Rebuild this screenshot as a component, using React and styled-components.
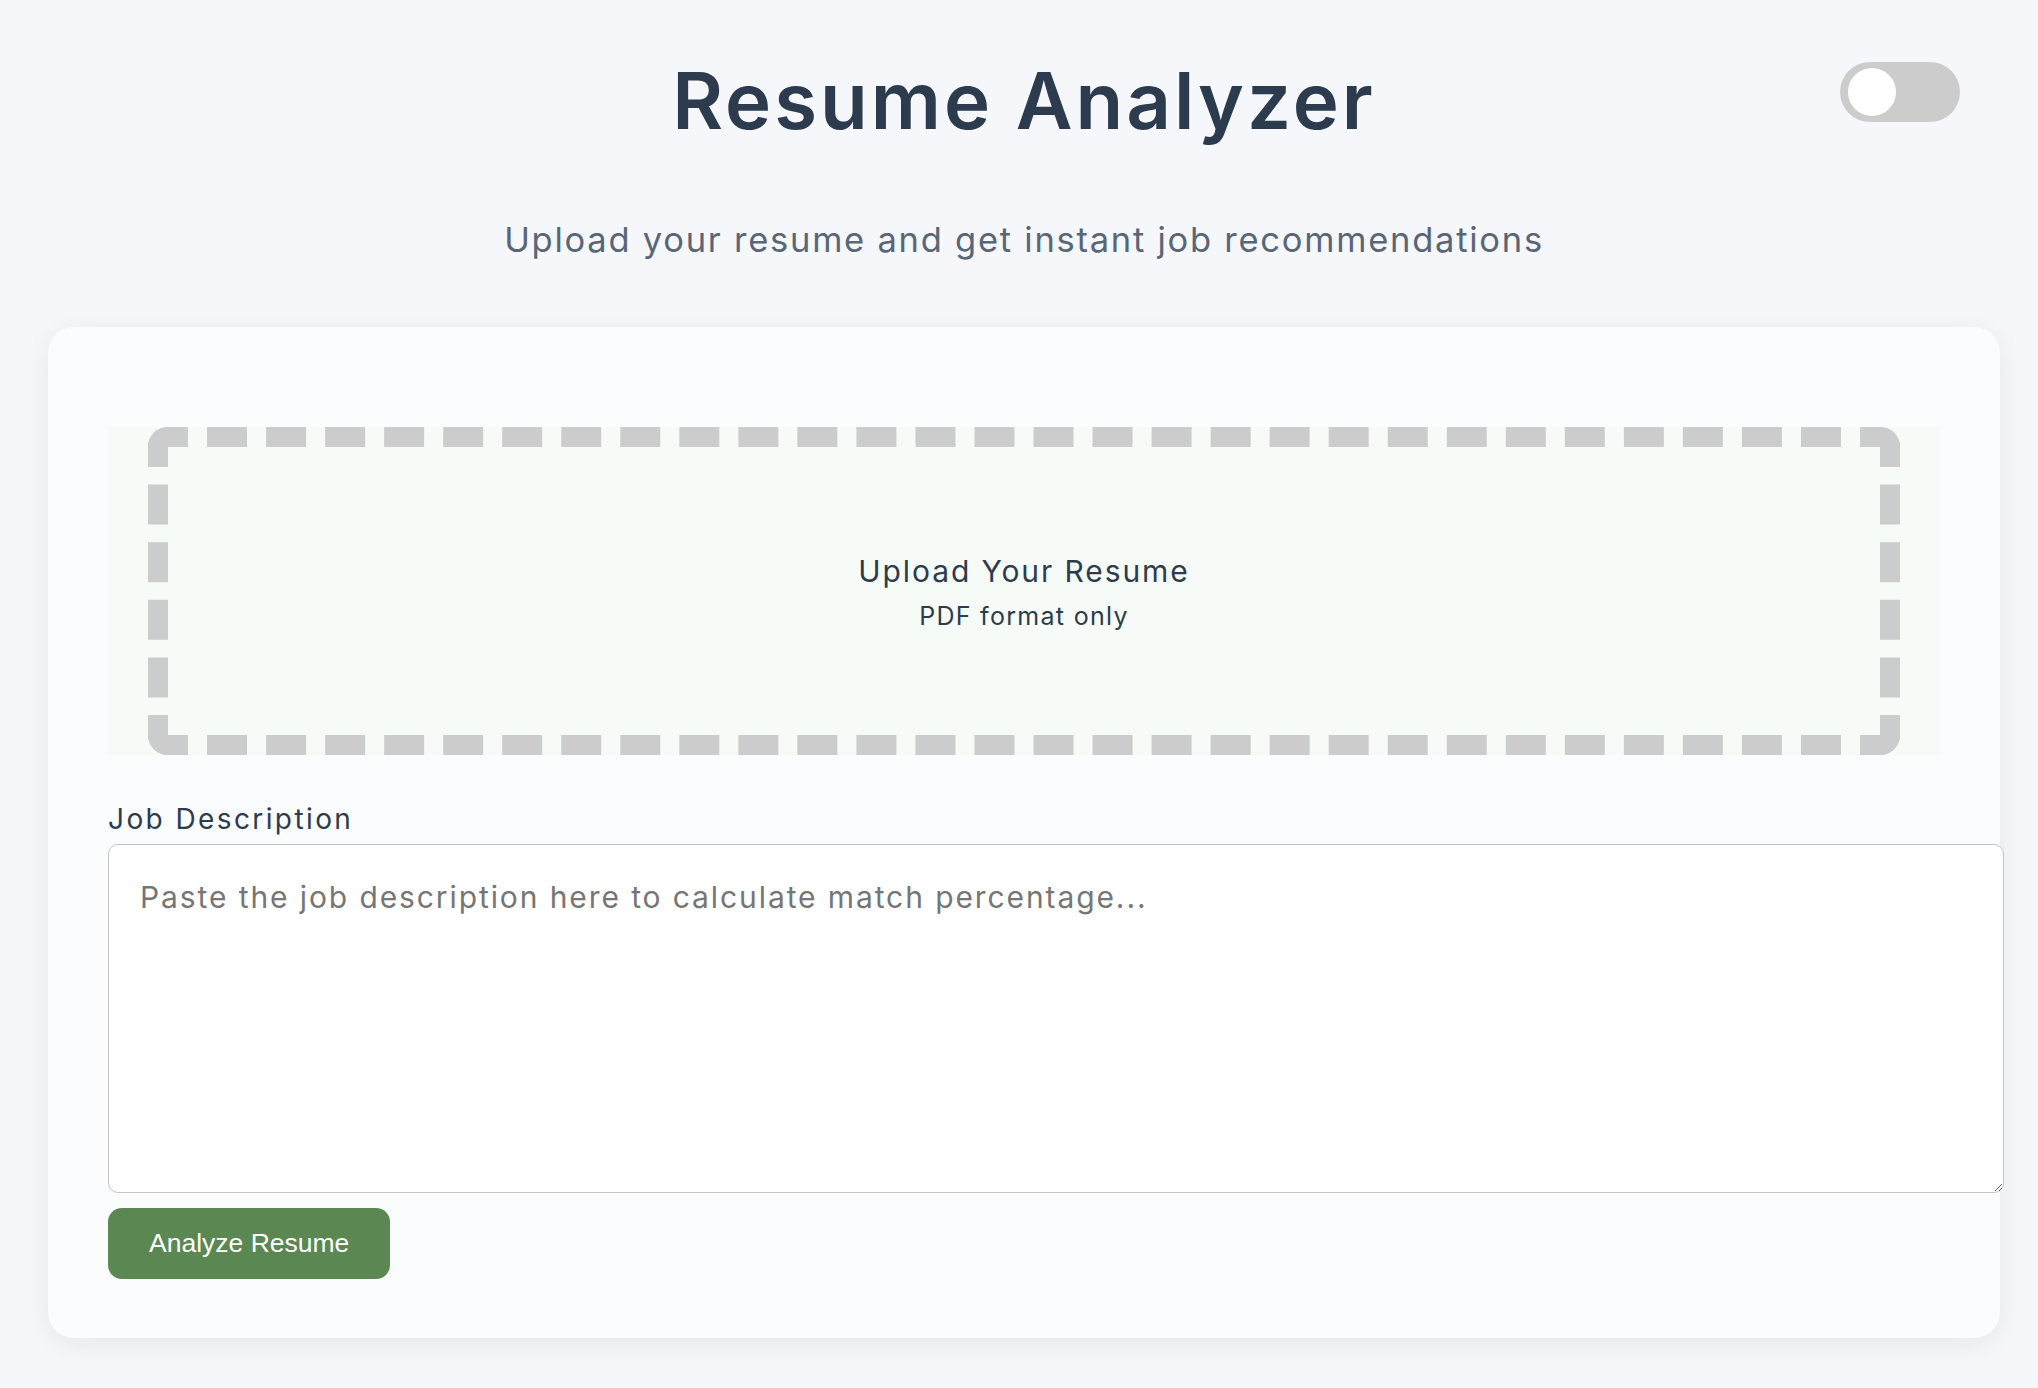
import { useState } from "react";
import styled, { createGlobalStyle } from "styled-components";

const GlobalStyle = createGlobalStyle`
  body {
    margin: 0;
    background: #f5f7fa;
    font-family: "Inter", "Noto Sans", sans-serif;
  }
`;

const App = () => {
  const [isDark, setIsDark] = useState(false);
  const [jobText, setJobText] = useState("");

  return (
    <>
      <GlobalStyle />
      <Page>
        <Header>
          <span />
          <Title>Resume Analyzer</Title>
          <Switch>
            <input
              type="checkbox"
              checked={isDark}
              onChange={() => setIsDark(!isDark)}
            />
            <Slider $on={isDark} />
          </Switch>
        </Header>
        <Subtitle>Upload your resume and get instant job recommendations</Subtitle>

        <Card>
          <Dropzone>
            <DashedBox>
              <UploadTitle>Upload Your Resume</UploadTitle>
              <UploadHint>PDF format only</UploadHint>
            </DashedBox>
          </Dropzone>

          <Label htmlFor="job">Job Description</Label>
          <TextArea
            id="job"
            value={jobText}
            onChange={(e) => setJobText(e.target.value)}
            placeholder="Paste the job description here to calculate match percentage..."
          />
          <div>
            <AnalyzeButton>Analyze Resume</AnalyzeButton>
          </div>
        </Card>
      </Page>
    </>
  );
};

export default App;

const Page = styled.div`
  padding: 53px 38px 60px 48px;
`;

const Header = styled.header`
  display: grid;
  grid-template-columns: 1fr auto 1fr;
  align-items: start;
`;

const Title = styled.h1`
  margin: 0;
  font-size: 78px;
  line-height: 96px;
  font-weight: 600;
  color: #2c3b4e;
  letter-spacing: 3px;
`;

const Switch = styled.label`
  justify-self: end;
  margin: 9px 40px 0 0;
  position: relative;
  width: 120px;
  height: 60px;
  cursor: pointer;

  input {
    opacity: 0;
    width: 0;
    height: 0;
  }
`;

const Slider = styled.span`
  position: absolute;
  inset: 0;
  border-radius: 30px;
  background: ${(p) => (p.$on ? "#5a8752" : "#cccccc")};

  &::before {
    content: "";
    position: absolute;
    top: 6px;
    left: ${(p) => (p.$on ? "64px" : "8px")};
    width: 48px;
    height: 48px;
    border-radius: 50%;
    background: #ffffff;
  }
`;

const Subtitle = styled.p`
  margin: 67px 0 0;
  text-align: center;
  font-size: 34.5px;
  line-height: 48px;
  letter-spacing: 1.75px;
  color: #586678;
`;

const Card = styled.main`
  margin-top: 63px;
  background: #fbfcfe;
  border-radius: 26px;
  padding: 100px 60px 59px;
  box-shadow: 0 6px 26px rgba(30, 40, 60, 0.07);
  display: flex;
  flex-direction: column;
`;

const Dropzone = styled.div`
  background: #f7fbf7;
  padding: 0 40px;
  height: 328px;
  display: flex;
`;

const DashedBox = styled.div`
  flex: 1;
  border: 20px dashed #cccccc;
  border-radius: 20px;
  display: flex;
  flex-direction: column;
  align-items: center;
  justify-content: center;
  color: #2c3b4e;
  cursor: pointer;
`;

const UploadTitle = styled.div`
  font-size: 30px;
  line-height: 46px;
  letter-spacing: 1.9px;
`;

const UploadHint = styled.div`
  margin-top: 3px;
  font-size: 25px;
  line-height: 38px;
  letter-spacing: 1.3px;
`;

const Label = styled.label`
  display: block;
  margin: 44px 0 5px;
  font-size: 28px;
  line-height: 40px;
  letter-spacing: 2.4px;
  color: #2c3b4e;
`;

const TextArea = styled.textarea`
  box-sizing: content-box;
  width: 100%;
  height: 285px;
  padding: 31px;
  border: 1px solid #c4c4c4;
  border-radius: 10px;
  background: #ffffff;
  font-family: "Inter", "Noto Sans", sans-serif;
  font-size: 30px;
  line-height: 42px;
  letter-spacing: 1.9px;
  color: #2c3b4e;
  margin: 0;

  &::placeholder {
    color: #767676;
  }
`;

const AnalyzeButton = styled.button`
  margin-top: 15px;
  height: 71px;
  padding: 0 41px;
  border: none;
  border-radius: 14px;
  background: #5a8752;
  color: #ffffff;
  font-family: "Liberation Sans", Arial, sans-serif;
  font-size: 26.5px;
  cursor: pointer;
`;
